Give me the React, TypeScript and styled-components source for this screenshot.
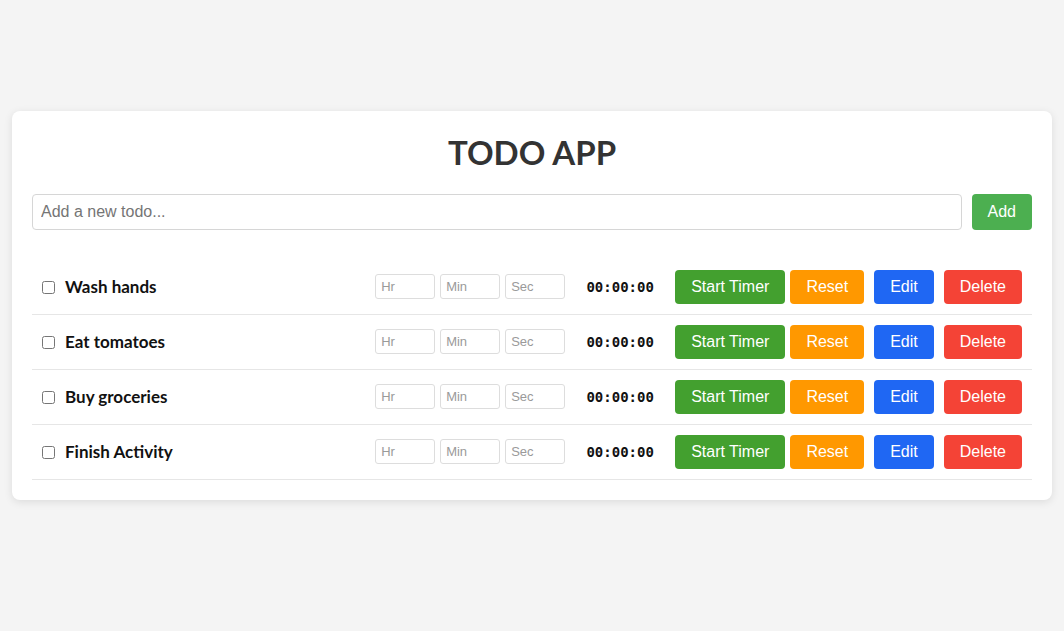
import React, { useState } from 'react';
import styled, { createGlobalStyle } from 'styled-components';

const GlobalStyle = createGlobalStyle`
  * { box-sizing: border-box; }
  body {
    margin: 0;
    background: #f4f4f4;
    font-family: "Liberation Sans", Arial, sans-serif;
  }
`;

const Page = styled.div`
  padding: 111px 12px 40px;
`;

const Card = styled.div`
  background: #fff;
  border-radius: 8px;
  box-shadow: 0 2px 8px rgba(0, 0, 0, 0.1);
  padding: 20px;
`;

const Title = styled.h1`
  margin: 0 0 20px;
  text-align: center;
  font-family: "Lato", "Open Sans", sans-serif;
  font-weight: 700;
  font-size: 33px;
  line-height: 43px;
  color: #333;
`;

const AddRow = styled.div`
  display: flex;
  gap: 10px;
`;

const TodoInput = styled.input`
  flex: 1;
  height: 36px;
  padding: 0 8px;
  border: 1px solid #d6d6d6;
  border-radius: 4px;
  font-family: "Liberation Sans", Arial, sans-serif;
  font-size: 16px;
  color: #333;
  &::placeholder { color: #757575; }
`;

const Button = styled.button<{ $bg: string; $gap?: number }>`
  height: 34px;
  padding: 0 16px;
  margin-left: ${p => p.$gap ?? 0}px;
  border: none;
  border-radius: 4px;
  background: ${p => p.$bg};
  color: #fff;
  font-family: "Liberation Sans", Arial, sans-serif;
  font-size: 16px;
  cursor: pointer;
  white-space: nowrap;
`;

const AddButton = styled(Button)`
  height: 36px;
`;

const List = styled.ul`
  list-style: none;
  margin: 30px 0 0;
  padding: 0;
`;

const Row = styled.li`
  display: flex;
  align-items: center;
  padding: 10px;
  border-bottom: 1px solid #e6e6e6;
`;

const Check = styled.input`
  width: 13px;
  height: 13px;
  margin: 0 10px 0 0;
`;

const Name = styled.span`
  flex: 1;
  font-family: "Lato", "Open Sans", sans-serif;
  font-weight: 700;
  font-size: 17px;
  line-height: 20px;
  color: #111;
`;

const TimeInputs = styled.div`
  display: flex;
  gap: 5px;
  margin-top: -1px;
`;

const TimeInput = styled.input`
  width: 60px;
  height: 25px;
  padding: 0 5px;
  border: 1px solid #ddd;
  border-radius: 3px;
  font-family: "Liberation Sans", Arial, sans-serif;
  font-size: 13px;
  &::placeholder { color: #9a9a9a; }
`;

const Clock = styled.span`
  width: 110px;
  text-align: center;
  font-family: "DejaVu Sans Mono", "Liberation Mono", monospace;
  font-weight: 700;
  font-size: 14px;
  color: #111;
`;

const initial = ['Wash hands', 'Eat tomatoes', 'Buy groceries', 'Finish Activity'];

export default function App() {
  const [todos] = useState(initial);
  return (
    <>
      <GlobalStyle />
      <Page>
        <Card>
          <Title>TODO APP</Title>
          <AddRow>
            <TodoInput placeholder="Add a new todo..." />
            <AddButton $bg="#4caf50">Add</AddButton>
          </AddRow>
          <List>
            {todos.map(t => (
              <Row key={t}>
                <Check type="checkbox" />
                <Name>{t}</Name>
                <TimeInputs>
                  <TimeInput placeholder="Hr" />
                  <TimeInput placeholder="Min" />
                  <TimeInput placeholder="Sec" />
                </TimeInputs>
                <Clock>00:00:00</Clock>
                <Button $bg="#43a02f">Start Timer</Button>
                <Button $bg="#ff9800" $gap={5}>Reset</Button>
                <Button $bg="#1f67f3" $gap={10}>Edit</Button>
                <Button $bg="#f44336" $gap={10}>Delete</Button>
              </Row>
            ))}
          </List>
        </Card>
      </Page>
    </>
  );
}
